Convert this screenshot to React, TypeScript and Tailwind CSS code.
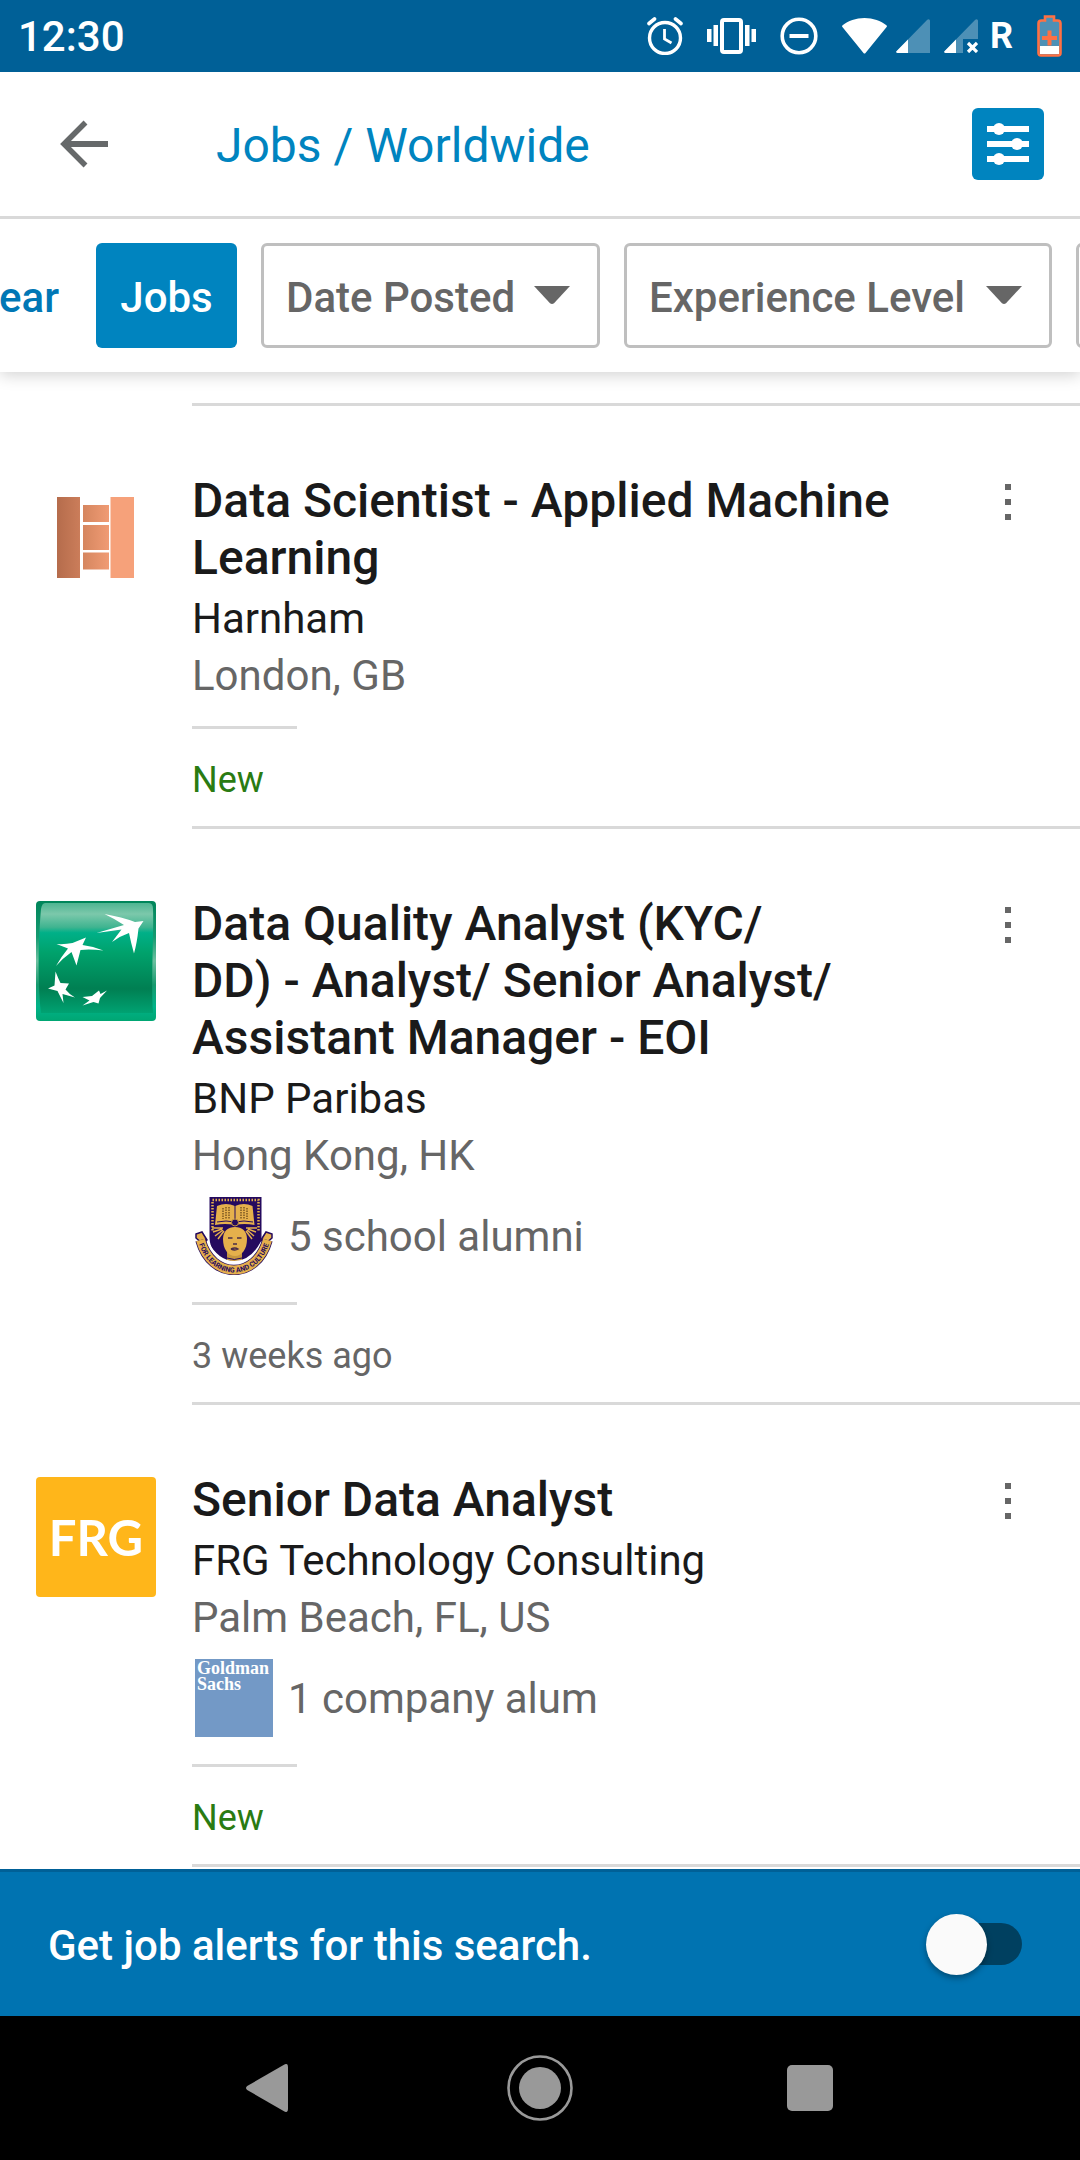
import { useState, type ReactNode } from "react";

function StatusBar() {
  return (
    <div className="flex h-[72px] shrink-0 items-center justify-between bg-[#006097] px-[18px] text-white">
      <span className="pt-0.5 text-[42px] leading-[48px] font-medium">12:30</span>
      <div className="flex items-center gap-6">
        <svg className="h-[38px] w-9" viewBox="0 0 36 38" fill="none" stroke="#fff" strokeLinecap="round">
          <circle cx="18" cy="21" r="15.5" strokeWidth="3.4" />
          <path d="M17.5 12v10l7 4" strokeWidth="2.8" strokeLinecap="butt" />
          <path d="M2 6.5 7.500 2M34 6.500 28.500 2" strokeWidth="3.600" />
        </svg>
        <svg className="h-9 w-[49px]" viewBox="0 0 49 36">
          <rect x="15" y="2" width="19" height="32" rx="2" fill="none" stroke="#fff" strokeWidth="4" />
          <path d="M0 11h4.500v13H0zM6.500 7h4.500v21H6.500zM38 7h4.500v21H38zM44.500 11H49v13h-4.500z" fill="#fff" />
        </svg>
        <svg className="h-[38px] w-[38px]" viewBox="0 0 38 38" fill="none" stroke="#fff" strokeWidth="3.600">
          <circle cx="19" cy="19" r="16.800" />
          <path d="M9.500 19h19" strokeWidth="4" />
        </svg>
        <div className="flex items-center">
          <svg className="mr-[9px] h-9 w-[45px]" viewBox="0 0 45 36">
            <path d="M22.500 0C14 0 6 3 .6 7.300c-.6.500-.7 1-.2 1.700L21.500 35c.6.800 1.400.8 2 0L44.600 9c.5-.7.400-1.200-.2-1.700C39 3 31 0 22.500 0z" fill="#fff" />
          </svg>
          <svg className="mr-3.5 h-[34px] w-[34px]" viewBox="0 0 34 34">
            <path d="M34 2v32H1.500C0 34-.3 33 .7 32L31 1c1.500-1.500 3-.7 3 1z" fill="#4d90b6" />
            <path d="M12 20.500V34H1.500C0 34-.3 33 .7 32z" fill="#fff" />
          </svg>
          <svg className="mr-3 h-[34px] w-[34px]" viewBox="0 0 34 34">
            <path d="M34 2v18H19v14H1.500C0 34-.3 33 .7 32L31 1c1.500-1.500 3-.7 3 1z" fill="#4d90b6" />
            <path d="M12 20.500V34H1.500C0 34-.3 33 .7 32z" fill="#fff" />
            <path d="m24 24 9 9m0-9-9 9" stroke="#fff" strokeWidth="3.200" />
          </svg>
          <span className="text-4xl font-bold">R</span>
        </div>
        <svg className="h-[42px] w-[25px]" viewBox="0 0 25 42">
          <path d="M8 1.500h9v4h3.500q3 0 3 3V38q0 2.500-2.500 2.500H4Q1.500 40.500 1.500 38V8.500q0-3 3-3H8z" fill="#4d90b6" stroke="#ff7043" strokeWidth="2.600" />
          <path d="M3 31h19v8H3z" fill="#fff" />
          <path d="M12.500 15.500v15M5 23h15" stroke="#ff7043" strokeWidth="4" />
        </svg>
      </div>
    </div>
  );
}

function Header() {
  return (
    <header className="relative z-20 flex h-[147px] shrink-0 items-center border-b-[3px] border-[#d9d9d9] bg-white pr-9 pl-[60px]">
      <button aria-label="Back" className="shrink-0">
        <svg className="h-12 w-12" viewBox="0 0 48 48" fill="none" stroke="#66696a" strokeWidth="6">
          <path d="M48 24H6" />
          <path d="M25.500 2.500 4 24l21.500 21.500" strokeWidth="5.500" />
        </svg>
      </button>
      <h1 className="ml-[108px] flex-1 pt-0.5 text-5xl leading-[57px] text-[#0084bf]">Jobs / Worldwide</h1>
      <button aria-label="Filters" className="flex h-[72px] w-[72px] items-center justify-center rounded-[6px] bg-[#0084bf]">
        <svg className="h-[42px] w-[42px]" viewBox="0 0 42 42" fill="#fff">
          <path d="M0 3h42v6H0zM0 18h42v6H0zM0 33h42v6H0z" />
          <circle cx="12" cy="6" r="6" />
          <circle cx="30" cy="21" r="6" />
          <circle cx="12" cy="36" r="6" />
        </svg>
      </button>
    </header>
  );
}

function FilterSelect({ label, width }: { label: string; width: string }) {
  return (
    <div className={`relative shrink-0 ${width}`}>
      <select
        aria-label={label}
        className="h-[105px] w-full appearance-none rounded-[6px] border-[3px] border-[#bfbfbf] bg-white pt-[3px] pl-[22px] text-[42px] font-medium text-[#666]"
      >
        <option>{label}</option>
      </select>
      <svg className="pointer-events-none absolute top-[43px] right-[30px] h-[18px] w-9" viewBox="0 0 36 18" fill="#666">
        <path d="M0 0h36L20 17.200Q18 18.600 16 17.200z" />
      </svg>
    </div>
  );
}

function Filters() {
  return (
    <div className="relative z-10 flex h-[153px] shrink-0 items-center gap-6 overflow-x-clip bg-white text-[42px] font-medium shadow-[0_3px_15px_rgba(0,0,0,0.18)]">
      <button className="mr-[13px] flex w-[59px] shrink-0 justify-end pt-[3px] text-[#0077b5]">Clear</button>
      <button className="h-[105px] w-[141px] shrink-0 rounded-[6px] bg-[#0084bf] pt-[3px] text-white">Jobs</button>
      <FilterSelect label="Date Posted" width="w-[339px]" />
      <FilterSelect label="Experience Level" width="w-[428px]" />
      <button aria-label="More filters" className="h-[105px] w-[200px] shrink-0 rounded-[6px] border-[3px] border-[#bfbfbf]" />
    </div>
  );
}

function HarnhamLogo() {
  return (
    <svg className="h-[120px] w-[120px]" viewBox="0 0 120 120" aria-label="Harnham logo">
      <defs>
        <linearGradient id="copper">
          <stop offset="0" stopColor="#b56c4c" />
          <stop offset="1" stopColor="#cb7d5a" />
        </linearGradient>
        <linearGradient id="peach">
          <stop offset="0" stopColor="#d5865f" />
          <stop offset="1" stopColor="#f09b74" />
        </linearGradient>
      </defs>
      <rect x="21" y="19" width="23" height="81" fill="url(#copper)" />
      <rect x="74.500" y="19" width="23.500" height="81" fill="#f6a17a" />
      <path d="M47 27h26v17H47zM47 47h26v25H47zM47 74.500h26v17H47z" fill="url(#peach)" />
    </svg>
  );
}

function BnpLogo() {
  return (
    <svg className="h-[120px] w-[120px] rounded-[4px]" viewBox="0 0 120 120" aria-label="BNP Paribas logo">
      <defs>
        <linearGradient id="bnpEdge" x2="0" y2="1">
          <stop offset="0" stopColor="#00855a" />
          <stop offset=".3" stopColor="#159a70" />
          <stop offset=".5" stopColor="#6cc0a0" />
          <stop offset=".7" stopColor="#169a6e" />
          <stop offset=".88" stopColor="#00b388" />
          <stop offset="1" stopColor="#00a673" />
        </linearGradient>
        <linearGradient id="bnpFace" x2="0" y2="1">
          <stop offset="0" stopColor="#4fb592" />
          <stop offset=".1" stopColor="#7cc8ab" />
          <stop offset=".22" stopColor="#3fb490" />
          <stop offset=".27" stopColor="#00b088" />
          <stop offset=".45" stopColor="#00a26c" />
          <stop offset=".78" stopColor="#007f52" />
          <stop offset="1" stopColor="#00a272" />
        </linearGradient>
      </defs>
      <rect width="120" height="120" fill="url(#bnpEdge)" />
      <path d="M9 2h104q4 0 4 6c1 22-2 68 0 104H5C1 76 3 30 5 8q1-6 4-6z" fill="url(#bnpFace)" />
      <g fill="#fff">
        <path d="M68.500 13Q86 16 99 21l8.500-1-5 7.500Q101 42 98 52.500 95 42 93 32q-9 3-17 9l9.500-12.500L60.500 32 88 24Q79 18 68.500 13z" />
        <path d="M50 36.500 46.500 44Q57 45 67.500 49.500 54 48 44.500 49L40.500 64.500 35.500 51Q27 57 20 65q5-9 12-17.500L20.500 43q9 .5 16-1z" />
        <path d="M19.500 70.500Q22 77 24.500 82l8.500.5-3.500 6Q33 93 39 96.500L26.500 93l1 9L21.500 90 12 87.500l6.500-3z" />
        <path d="M63 89.500 64.500 93l6.500-3.500-7 7.500-1.500 5.500-5-1.500-11 3.500 7-5-7-3.500L56 95z" />
      </g>
    </svg>
  );
}

function FrgLogo() {
  return (
    <svg className="h-[120px] w-[120px] rounded-[4px]" viewBox="0 0 120 120" aria-label="FRG logo">
      <rect width="120" height="120" fill="#ffb61a" />
      <text x="60" y="79" textAnchor="middle" fill="#fff" fontFamily="Lato, sans-serif" fontWeight="700" fontSize="49">
        FRG
      </text>
    </svg>
  );
}

function SchoolCrest() {
  return (
    <svg className="h-[78px] w-[78px]" viewBox="0 0 78 78" aria-label="School crest">
      <path d="M14.500 0h52v40c0 14-10 23-26 27-16-4-26-13-26-27z" fill="#250a5e" />
      <path d="M17.500 3h46v32" fill="none" stroke="#e5b04c" strokeWidth="2.500" strokeDasharray="1.500 1.500" />
      <path d="M17.500 5v30" stroke="#e5b04c" strokeWidth="2.500" strokeDasharray="1.500 1.500" />
      <path d="M22 9Q31 5 40 9q9-4 17.500 0l2 19q-10-2-19.500 0-10-2-20 0z" fill="#e5b04c" />
      <path d="M40 8v19M22 25q9-2 18 0 9-2 18 0" stroke="#250a5e" strokeWidth="1" fill="none" />
      <path d="M28 11v11M31 10v12M34 10v12M46 10v12M49 10v12M52 11v11" stroke="#73501f" strokeWidth="1.400" strokeDasharray="1.500 1" />
      <path d="m17 31 11 0M18 35l9-3M20 39l8-6M23 42l6-8M62 31H51M61 35l-8-3M59 39l-7-6M57 42l-6-8" stroke="#e5b04c" strokeWidth="1.500" />
      <circle cx="40" cy="25.500" r="3.500" fill="#250a5e" stroke="#c6963f" strokeWidth="1" />
      <path d="M32 54h15v10q-7 5-15 0z" fill="#c6963f" />
      <path d="M28 42c0-8 5-12 12-12s12 4 12 12c0 10-5 17-12 17s-12-7-12-17z" fill="#e5b04c" />
      <path d="M33 41h4.500M42 41h4.500M38 47h4M36 52q4-2 7 0-3 2-7 0" stroke="#4a2c47" strokeWidth="1.500" fill="none" />
      <path d="M32 61q7 3 15 0M33 64q7 2 13 0" stroke="#250a5e" strokeWidth="1" fill="none" />
      <path d="M11 45C19 60 28 66 39.500 66S60 60 68 45" fill="none" stroke="#fff" strokeWidth="4" />
      <path d="M1 37 7 35l5 8-4 4-7-6zM77 37l-6-2-5 8 4 4 7-6z" fill="#e5b04c" stroke="#250a5e" strokeWidth="1.500" />
      <path d="M5.500 43C11 63 25 73 39 73s28-10 33.500-30" fill="none" stroke="#250a5e" strokeWidth="10.500" />
      <path d="M5.500 43C11 63 25 73 39 73s28-10 33.500-30" fill="none" stroke="#e5b04c" strokeWidth="9" />
      <path id="motto" d="M3 44C9 65 24 75.500 39 75.500S69 65 75 44" fill="none" />
      <text fill="#250a5e" fontFamily="Roboto, sans-serif" fontWeight="700" fontSize="7">
        <textPath href="#motto" startOffset="50%" textAnchor="middle">FOR LEARNING AND CULTURE</textPath>
      </text>
    </svg>
  );
}

function GoldmanLogo() {
  return (
    <svg className="h-[78px] w-[78px]" viewBox="0 0 78 78" aria-label="Goldman Sachs logo">
      <rect width="78" height="78" fill="#7399c6" />
      <g fill="#fff" fontFamily="Liberation Serif, serif" fontWeight="700" fontSize="18">
        <text x="2" y="15">Goldman</text>
        <text x="2" y="31">Sachs</text>
      </g>
    </svg>
  );
}

type Job = {
  title: string;
  company: string;
  place: string;
  logo: ReactNode;
  link?: { icon: ReactNode; text: string };
  age: string;
  isNew?: boolean;
};

const jobs: Job[] = [
  {
    title: "Data Scientist - Applied Machine Learning",
    company: "Harnham",
    place: "London, GB",
    logo: <HarnhamLogo />,
    age: "New",
    isNew: true,
  },
  {
    title: "Data Quality Analyst (KYC/\nDD) - Analyst/ Senior Analyst/\nAssistant Manager - EOI",
    company: "BNP Paribas",
    place: "Hong Kong, HK",
    logo: <BnpLogo />,
    link: { icon: <SchoolCrest />, text: "5 school alumni" },
    age: "3 weeks ago",
  },
  {
    title: "Senior Data Analyst",
    company: "FRG Technology Consulting",
    place: "Palm Beach, FL, US",
    logo: <FrgLogo />,
    link: { icon: <GoldmanLogo />, text: "1 company alum" },
    age: "New",
    isNew: true,
  },
];

function JobRow({ job }: { job: Job }) {
  return (
    <li className="flex pl-9">
      <div className="mt-[72px] mr-9 shrink-0">{job.logo}</div>
      <div className="flex min-w-0 flex-1 items-start border-b-[3px] border-[#d9d9d9] pt-[66px] pb-[25px]">
        <div className="min-w-0 flex-1 text-[42px] leading-[57px]">
          <h2 className="text-5xl leading-[57px] font-medium whitespace-pre-line text-[#1a1a1a]">{job.title}</h2>
          <p className="mt-1 text-[#1a1a1a]">{job.company}</p>
          <p className="text-[#666]">{job.place}</p>
          {job.link && (
            <div className="flex items-center gap-[15px] pt-[13px] pb-[5px] pl-[3px] text-[#666]">
              {job.link.icon}
              <span>{job.link.text}</span>
            </div>
          )}
          <div className="mt-[22px] h-[3px] w-[105px] bg-[#d9d9d9]" />
          <p className={job.isNew ? "mt-[30px] text-4xl leading-[42px] text-[#2a7b12]" : "mt-[30px] text-4xl leading-[42px] text-[#666]"}>
            {job.age}
          </p>
        </div>
        <button aria-label="Job options" className="mt-3 flex w-[144px] shrink-0 justify-center">
          <svg className="h-9 w-[6px]" viewBox="0 0 6 36" fill="#666">
            <path d="M0 0h6v6H0zM0 15h6v6H0zM0 30h6v6H0z" />
          </svg>
        </button>
      </div>
    </li>
  );
}

function AlertBar() {
  const [on, setOn] = useState(false);
  return (
    <label className="flex h-[147px] shrink-0 items-center justify-between border-t-[3px] border-[#006097] bg-[#0073b1] pr-[58px] pl-12">
      <span className="pt-[3px] text-[42px] leading-[57px] font-medium text-white">Get job alerts for this search.</span>
      <span className="relative flex h-[61px] w-24 items-center">
        <input
          type="checkbox"
          role="switch"
          checked={on}
          onChange={(e) => setOn(e.target.checked)}
          className="peer ml-auto h-[42px] w-[90px] appearance-none rounded-full bg-[#004060]"
        />
        <span className="pointer-events-none absolute left-0 h-[61px] w-[61px] rounded-full bg-[#fafafa] shadow-[0_3px_6px_rgba(0,0,0,0.35)] peer-checked:left-[35px]" />
      </span>
    </label>
  );
}

function NavBar() {
  return (
    <nav className="grid h-36 shrink-0 grid-cols-3 bg-black px-[12.5%]">
      <button aria-label="Back" className="flex items-center justify-center">
        <svg className="mr-1.5 h-12 w-[42px]" viewBox="0 0 42 48" fill="#999">
          <path d="M38 .7Q42-1.500 42 3v42q0 4.500-4 2.300L1.200 26q-2.400-2 0-4z" />
        </svg>
      </button>
      <button aria-label="Home" className="flex items-center justify-center">
        <svg className="h-[66px] w-[66px]" viewBox="0 0 66 66">
          <circle cx="33" cy="33" r="31.500" fill="none" stroke="#999" strokeWidth="2.600" />
          <circle cx="33" cy="33" r="21" fill="#999" />
        </svg>
      </button>
      <button aria-label="Recent apps" className="flex items-center justify-center">
        <span className="h-[46px] w-[46px] rounded-[5px] bg-[#999]" />
      </button>
    </nav>
  );
}

export default function App() {
  return (
    <div className="flex min-h-screen flex-col overflow-x-hidden bg-white font-[Roboto,sans-serif]">
      <StatusBar />
      <Header />
      <Filters />
      <main className="flex-1">
        <div className="mt-[31px] ml-[192px] h-[3px] bg-[#d9d9d9]" />
        <ul>
          {jobs.map((job) => (
            <JobRow key={job.title} job={job} />
          ))}
        </ul>
      </main>
      <AlertBar />
      <NavBar />
    </div>
  );
}
